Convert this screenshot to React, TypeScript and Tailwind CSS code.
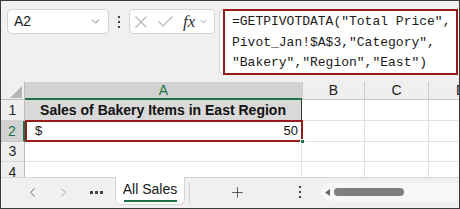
import { ChevronDown, ChevronLeft, ChevronRight, Plus } from 'lucide-react'

const font = { fontFamily: '"Liberation Sans", Arial, sans-serif' }

function VDots() {
  return (
    <div className="flex flex-col items-center gap-[3px]">
      <span className="h-[2px] w-[2px] bg-[#444]" />
      <span className="h-[2px] w-[2px] bg-[#444]" />
      <span className="h-[2px] w-[2px] bg-[#444]" />
    </div>
  )
}

function RowHead({ n, active }: { n: number; active?: boolean }) {
  return (
    <div
      className={
        active
          ? 'flex w-[24px] shrink-0 items-center justify-center border-r-2 border-r-[#1e7145] border-b border-b-[#c6c6c6] bg-[#d2d2d2] text-[14px] text-[#1e7145]'
          : 'flex w-[24px] shrink-0 items-center justify-center border-r border-r-[#bdbdbd] border-b border-b-[#d6d6d6] bg-[#efefef] text-[14px] text-[#262626]'
      }
    >
      {n}
    </div>
  )
}

function Blank({ w }: { w: string }) {
  return <div className={`${w} shrink-0 border-r border-b border-[#e1e1e1] bg-white`} />
}

export default function App() {
  return (
    <div
      className="flex h-[209px] w-[460px] flex-col overflow-hidden border border-[#3a3a3a] bg-[#f0f0f0]"
      style={font}
    >
      {/* name box + formula bar */}
      <div className="flex h-[81px] shrink-0 items-start pl-[6px] pt-[8px]">
        <div className="flex h-[25px] w-[102px] items-center justify-between rounded-[5px] border border-[#d4d4d4] bg-white pl-[6px] pr-[6px]">
          <span className="text-[14px] text-[#1a1a1a]">A2</span>
          <ChevronDown size={13} strokeWidth={1.6} className="text-[#666]" />
        </div>
        <div className="flex h-[25px] w-[20px] items-center justify-center">
          <VDots />
        </div>
        <div className="flex h-[25px] w-[86px] items-center rounded-[5px] border border-[#d4d4d4] bg-white pl-[5px]">
          <svg width="12" height="12" viewBox="0 0 12 12" className="shrink-0">
            <path d="M0.5 0.5 L11.5 11.5 M11.5 0.5 L0.5 11.5" stroke="#b5b5b5" strokeWidth="1.1" fill="none" />
          </svg>
          <svg width="15" height="11" viewBox="0 0 15 11" className="ml-[11px] shrink-0">
            <path d="M0.5 5.5 L5 10 L14.5 0.5" stroke="#b5b5b5" strokeWidth="1.1" fill="none" />
          </svg>
          <span
            className="ml-[10px] text-[17px] italic text-[#333]"
            style={{ fontFamily: '"Liberation Serif", "Times New Roman", serif' }}
          >
            fx
          </span>
          <ChevronDown size={11} strokeWidth={1.4} className="ml-[3px] text-[#777]" />
        </div>
        <div className="relative ml-[4px] h-[66px] flex-1 rounded-l-[5px] border border-r-0 border-[#d4d4d4] bg-white">
          <div
            className="pl-[12px] pt-[2px] text-[13px] leading-[20.5px] text-[#1a1a1a]"
            style={{ fontFamily: '"Liberation Mono", "Courier New", monospace' }}
          >
            <div>=GETPIVOTDATA("Total Price",</div>
            <div>Pivot_Jan!$A$3,"Category",</div>
            <div>"Bakery","Region","East")</div>
          </div>
          <div className="absolute -top-[1px] bottom-[-1px] left-[3px] right-[1px] border-2 border-[#961b1b]" />
        </div>
      </div>

      {/* column headers */}
      <div className="flex h-[18px] shrink-0">
        <div className="relative w-[24px] shrink-0 border-r border-b border-[#bdbdbd] bg-[#efefef]">
          <svg className="absolute left-[9px] top-[4px]" width="12" height="12" viewBox="0 0 12 12">
            <polygon points="12,0 12,12 0,12" fill="#b5b5b5" />
          </svg>
        </div>
        <div className="flex w-[277px] shrink-0 items-center justify-center border-b-2 border-[#1e7145] bg-[#d2d2d2] text-[14px] text-[#1e7145]">
          A
        </div>
        <div className="flex w-[63px] shrink-0 items-center justify-center border-l border-r border-b border-[#c9c9c9] bg-[#efefef] text-[14px] text-[#222]">
          B
        </div>
        <div className="flex w-[64px] shrink-0 items-center justify-center border-r border-b border-[#c9c9c9] bg-[#efefef] text-[14px] text-[#222]">
          C
        </div>
        <div className="flex w-[64px] shrink-0 items-center justify-center border-b border-[#c9c9c9] bg-[#efefef] text-[14px] text-[#222]">
          D
        </div>
      </div>

      {/* row 1 */}
      <div className="flex h-[21px] shrink-0">
        <RowHead n={1} />
        <div className="flex w-[277px] shrink-0 items-center justify-center border-r border-b border-[#333] bg-[#d9d9d9] text-[14px] font-bold text-[#111]">
          Sales of Bakery Items in East Region
        </div>
        <Blank w="w-[63px]" />
        <Blank w="w-[64px]" />
        <div className="flex-1 border-b border-[#e1e1e1] bg-white" />
      </div>

      {/* row 2 */}
      <div className="flex h-[21px] shrink-0">
        <RowHead n={2} active />
        <div className="relative flex w-[277px] shrink-0 items-center justify-between border-b border-[#e1e1e1] bg-white pl-[10px] pr-[4px] text-[13px] text-[#111]">
          <span>$</span>
          <span>50</span>
          <div className="absolute -top-[1px] -bottom-[1px] left-0 -right-[1px] border-2 border-[#961b1b]" />
          <div className="absolute -bottom-[3px] -right-[3px] h-[5px] w-[5px] border border-white bg-[#1e7145]" />
        </div>
        <Blank w="w-[63px]" />
        <Blank w="w-[64px]" />
        <div className="flex-1 border-b border-[#e1e1e1] bg-white" />
      </div>

      {/* row 3 */}
      <div className="flex h-[20px] shrink-0">
        <RowHead n={3} />
        <Blank w="w-[277px]" />
        <Blank w="w-[63px]" />
        <Blank w="w-[64px]" />
        <div className="flex-1 border-b border-[#e1e1e1] bg-white" />
      </div>

      {/* row 4 (cut off) */}
      <div className="flex h-[15px] shrink-0 overflow-hidden">
        <div className="flex w-[24px] shrink-0 items-start justify-center border-r border-[#bdbdbd] bg-[#efefef] pt-[2px] text-[14px] leading-[16px] text-[#262626]">
          4
        </div>
        <div className="w-[277px] shrink-0 border-r border-[#e1e1e1] bg-white" />
        <div className="w-[63px] shrink-0 border-r border-[#e1e1e1] bg-white" />
        <div className="w-[64px] shrink-0 border-r border-[#e1e1e1] bg-white" />
        <div className="flex-1 bg-white" />
      </div>

      {/* sheet tabs */}
      <div className="flex h-[31px] shrink-0 items-start border-t border-[#d6d6d6] bg-[#f0f0f0]">
        <div className="flex h-[28px] w-[114px] items-center pl-[24px] text-[#555]">
          <ChevronLeft size={15} strokeWidth={1.4} />
          <ChevronRight size={15} strokeWidth={1.4} className="ml-[16px] text-[#999]" />
          <div className="ml-[19px] flex gap-[2px]">
            <span className="h-[3px] w-[3px] bg-[#444]" />
            <span className="h-[3px] w-[3px] bg-[#444]" />
            <span className="h-[3px] w-[3px] bg-[#444]" />
          </div>
        </div>
        <div className="-mt-[1px] flex h-[28px] w-[70px] flex-col items-center justify-center rounded-b-[6px] border border-t-0 border-[#d6d6d6] bg-white">
          <span className="mt-[2px] text-[14px] leading-[16px] text-[#1a1a1a]">All Sales</span>
          <span className="mt-[3px] h-[2px] w-[53px] bg-[#1e7145]" />
        </div>
        <div className="ml-[4px] mt-[5px] h-[21px] w-[1px] bg-[#cfcfcf]" />
        <div className="flex h-[28px] w-[95px] items-center justify-center">
          <Plus size={17} strokeWidth={1.1} className="text-[#333]" />
        </div>
        <div className="flex h-[28px] w-[30px] items-center justify-center">
          <VDots />
        </div>
        <div className="ml-[6px] mt-[5px] flex h-[18px] flex-1 items-center rounded-l-full bg-[#f7f7f7] pl-[4px]">
          <svg width="5" height="7" viewBox="0 0 5 7">
            <polygon points="5,0 5,7 0,3.5" fill="#666" />
          </svg>
          <span className="ml-[4px] h-[8px] w-[70px] rounded-full bg-[#7e7e7e]" />
        </div>
      </div>
    </div>
  )
}
